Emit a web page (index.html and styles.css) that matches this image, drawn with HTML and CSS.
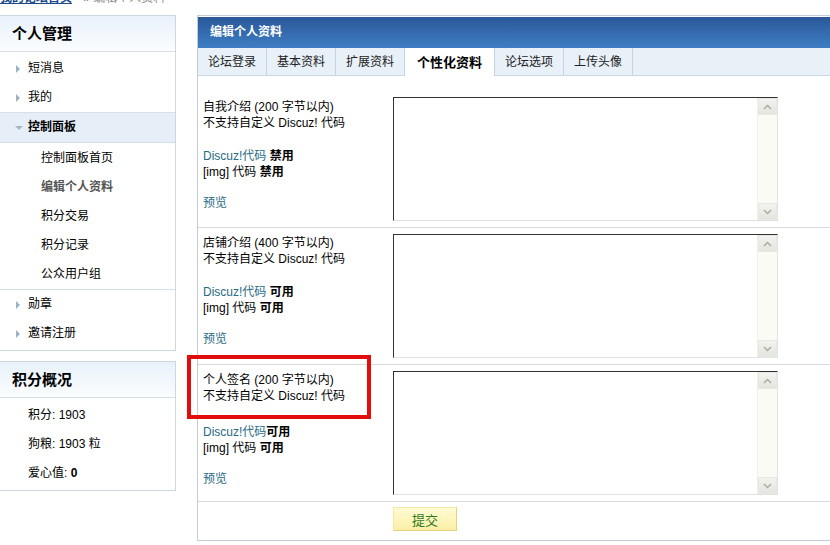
FILE: index.html
```html
<!DOCTYPE html>
<html lang="zh-CN">
<head>
    <meta charset="UTF-8">
    <title>编辑个人资料</title>
    <link rel="stylesheet" href="styles.css">
</head>
<body>
    <div class="crumb"><span><a href="#">我的论坛首页</a> &raquo; 编辑个人资料</span></div>
    <div class="page">
        <aside class="side">
            <div class="box">
                <h3>个人管理</h3>
                <ul class="menu">
                    <li class="item"><i class="arr"></i>短消息</li>
                    <li class="item"><i class="arr"></i>我的</li>
                    <li class="item open"><i class="arr"></i>控制面板</li>
                    <li class="subs">
                        <a href="#">控制面板首页</a>
                        <a href="#" class="cur">编辑个人资料</a>
                        <a href="#">积分交易</a>
                        <a href="#">积分记录</a>
                        <a href="#">公众用户组</a>
                    </li>
                    <li class="item"><i class="arr"></i>勋章</li>
                    <li class="item"><i class="arr"></i>邀请注册</li>
                </ul>
            </div>
            <div class="box">
                <h3>积分概况</h3>
                <ul class="stats">
                    <li>积分: 1903</li>
                    <li>狗粮: 1903 粒</li>
                    <li>爱心值: <b>0</b></li>
                </ul>
            </div>
        </aside>

        <main class="panel">
            <div class="panel-title">编辑个人资料</div>
            <ul class="tabs">
                <li>论坛登录</li>
                <li>基本资料</li>
                <li>扩展资料</li>
                <li class="active">个性化资料</li>
                <li>论坛选项</li>
                <li>上传头像</li>
            </ul>
            <form>
                <div class="row first">
                    <div class="label">
                        <p>自我介绍 (200 字节以内)<br>不支持自定义 Discuz! 代码</p>
                        <p><a href="#">Discuz!代码</a> <b>禁用</b><br>[img] 代码 <b>禁用</b></p>
                        <a href="#">预览</a>
                    </div>
                    <div class="editbox">
                        <textarea></textarea>
                        <div class="sbar"><span class="sbtn"><svg width="9" height="6" viewBox="0 0 9 6"><polyline points="1,5 4.5,1.5 8,5" /></svg></span><span class="sbtn"><svg width="9" height="6" viewBox="0 0 9 6"><polyline points="1,1 4.5,4.5 8,1" /></svg></span></div>
                    </div>
                </div>
                <div class="row">
                    <div class="label">
                        <p>店铺介绍 (400 字节以内)<br>不支持自定义 Discuz! 代码</p>
                        <p><a href="#">Discuz!代码</a> <b>可用</b><br>[img] 代码 <b>可用</b></p>
                        <a href="#">预览</a>
                    </div>
                    <div class="editbox">
                        <textarea></textarea>
                        <div class="sbar"><span class="sbtn"><svg width="9" height="6" viewBox="0 0 9 6"><polyline points="1,5 4.5,1.5 8,5" /></svg></span><span class="sbtn"><svg width="9" height="6" viewBox="0 0 9 6"><polyline points="1,1 4.5,4.5 8,1" /></svg></span></div>
                    </div>
                </div>
                <div class="row sign">
                    <div class="label">
                        <p>个人签名 (200 字节以内)<br>不支持自定义 Discuz! 代码</p>
                        <p><a href="#">Discuz!代码</a><b>可用</b><br>[img] 代码 <b>可用</b></p>
                        <a href="#">预览</a>
                    </div>
                    <div class="editbox">
                        <textarea></textarea>
                        <div class="sbar"><span class="sbtn"><svg width="9" height="6" viewBox="0 0 9 6"><polyline points="1,5 4.5,1.5 8,5" /></svg></span><span class="sbtn"><svg width="9" height="6" viewBox="0 0 9 6"><polyline points="1,1 4.5,4.5 8,1" /></svg></span></div>
                    </div>
                </div>
                <div class="row submit">
                    <span></span>
                    <button type="button">提交</button>
                </div>
            </form>
            <div class="mark"></div>
        </main>
    </div>
</body>
</html>
```

FILE: styles.css
```css
html {
    overflow: hidden;
}
body {
    margin: 0;
    font-family: "Liberation Sans", "Noto Sans CJK SC", sans-serif;
    font-size: 12px;
    color: #000;
    background: #fff;
}
a {
    color: #276a84;
    text-decoration: none;
}
ul {
    list-style: none;
    margin: 0;
    padding: 0;
}
.crumb {
    height: 7px;
    overflow: hidden;
    margin-bottom: 8px;
    color: #888;
}
.crumb span {
    display: block;
    margin-top: -9px;
    line-height: 14px;
}
.crumb a {
    color: #1a4a8c;
    font-weight: bold;
    text-decoration: underline;
    margin-right: 8px;
}
.page {
    display: flex;
    align-items: flex-start;
    gap: 21px;
}
.side {
    width: 177px;
    margin-left: -1px;
    flex-shrink: 0;
}
.box {
    border: 1px solid #cdd7e0;
    margin-bottom: 10px;
    padding-bottom: 2px;
}
.box h3 {
    margin: 0;
    height: 35px;
    line-height: 35px;
    padding-left: 12px;
    font-size: 15px;
    font-weight: bold;
    border-bottom: 1px solid #d7e0e8;
    background: linear-gradient(#e8f1fa, #fbfdff);
}
.menu {
    padding-top: 2px;
}
.menu .item {
    height: 29px;
    line-height: 29px;
    padding-left: 28px;
    position: relative;
}
.arr {
    position: absolute;
    left: 16px;
    top: 11px;
    border-left: 4px solid #9cb3c6;
    border-top: 4px solid transparent;
    border-bottom: 4px solid transparent;
}
.menu .open {
    font-weight: bold;
    background: #e6eef7;
    border-top: 1px solid #d5dfe8;
    border-bottom: 1px solid #d5dfe8;
}
.open .arr {
    left: 15px;
    top: 13px;
    border-top: 4px solid #a9b7c4;
    border-left: 4px solid transparent;
    border-right: 4px solid transparent;
    border-bottom: none;
}
.subs {
    padding-top: 1px;
    border-bottom: 1px solid #d5dfe8;
}
.subs a {
    display: block;
    height: 29px;
    line-height: 29px;
    padding-left: 41px;
    color: #000;
}
.subs a.cur {
    font-weight: bold;
    color: #555;
}
.stats {
    padding-top: 3px;
}
.stats li {
    height: 29px;
    line-height: 29px;
    padding-left: 28px;
}
.panel {
    position: relative;
    width: 720px;
    flex-shrink: 0;
    border: 1px solid #c3cbd3;
    border-right: none;
    padding-top: 1px;
}
.panel-title {
    height: 31px;
    line-height: 31px;
    padding-left: 12px;
    color: #fff;
    font-weight: bold;
    background: linear-gradient(#2a5898, #3e7ec4);
}
.tabs {
    display: flex;
    height: 27px;
    background: #e8f0f8;
    border-bottom: 1px solid #cbd7e3;
}
.tabs li {
    padding: 2px 10px 0;
    line-height: 25px;
    border-right: 1px solid #c7d4e0;
    color: #222;
}
.tabs li.active {
    padding: 2px 12px 0;
    background: #fff;
    font-weight: bold;
    font-size: 13px;
    height: 26px;
    color: #000;
}
.row {
    display: grid;
    grid-template-columns: 195px 385px;
    padding: 6px 0;
    border-bottom: 1px solid #d6dbe0;
}
.row.first {
    padding-top: 21px;
}
.label {
    padding: 1px 0 0 5px;
    line-height: 16px;
}
.row.first .label {
    padding-top: 2px;
}
.label p {
    margin: 0 0 17px;
}
.label p + p {
    margin-bottom: 15px;
}
.row.sign .label p {
    margin-bottom: 20px;
}
.row.sign .label p + p {
    margin-bottom: 15px;
}
.editbox {
    display: flex;
    height: 124px;
    box-sizing: border-box;
    border: 1px solid #e2e2e2;
    border-top-color: #333;
    border-left-color: #333;
    background: #fff;
}
.editbox textarea {
    flex: 1;
    border: none;
    resize: none;
    outline: none;
    margin: 0;
    padding: 2px;
}
.sbar {
    width: 19px;
    display: flex;
    flex-direction: column;
    justify-content: space-between;
    background: #fbfbf6;
    border-left: 1px solid #f0f0ea;
}
.sbtn {
    height: 17px;
    display: flex;
    align-items: center;
    justify-content: center;
    background: linear-gradient(#f1f3ee, #e3e6df);
    border: 1px solid #e6e8e2;
    box-sizing: border-box;
}
.sbtn svg polyline {
    fill: none;
    stroke: #a9aea4;
    stroke-width: 1.5;
}
.row.submit {
    padding: 5px 0 9px;
    border-bottom: none;
}
.submit button {
    width: 64px;
    height: 24px;
    padding: 0;
    font-family: inherit;
    font-size: 13px;
    color: #2e7a1c;
    background: linear-gradient(#fffbd4, #fbefa6);
    border: 1px solid #f6e9a6;
    border-right-color: #e3d27c;
    border-bottom-color: #e3d27c;
}
.mark {
    position: absolute;
    left: -11px;
    top: 339px;
    width: 184px;
    height: 64px;
    box-sizing: border-box;
    border: 4px solid #e10c0c;
}
```
